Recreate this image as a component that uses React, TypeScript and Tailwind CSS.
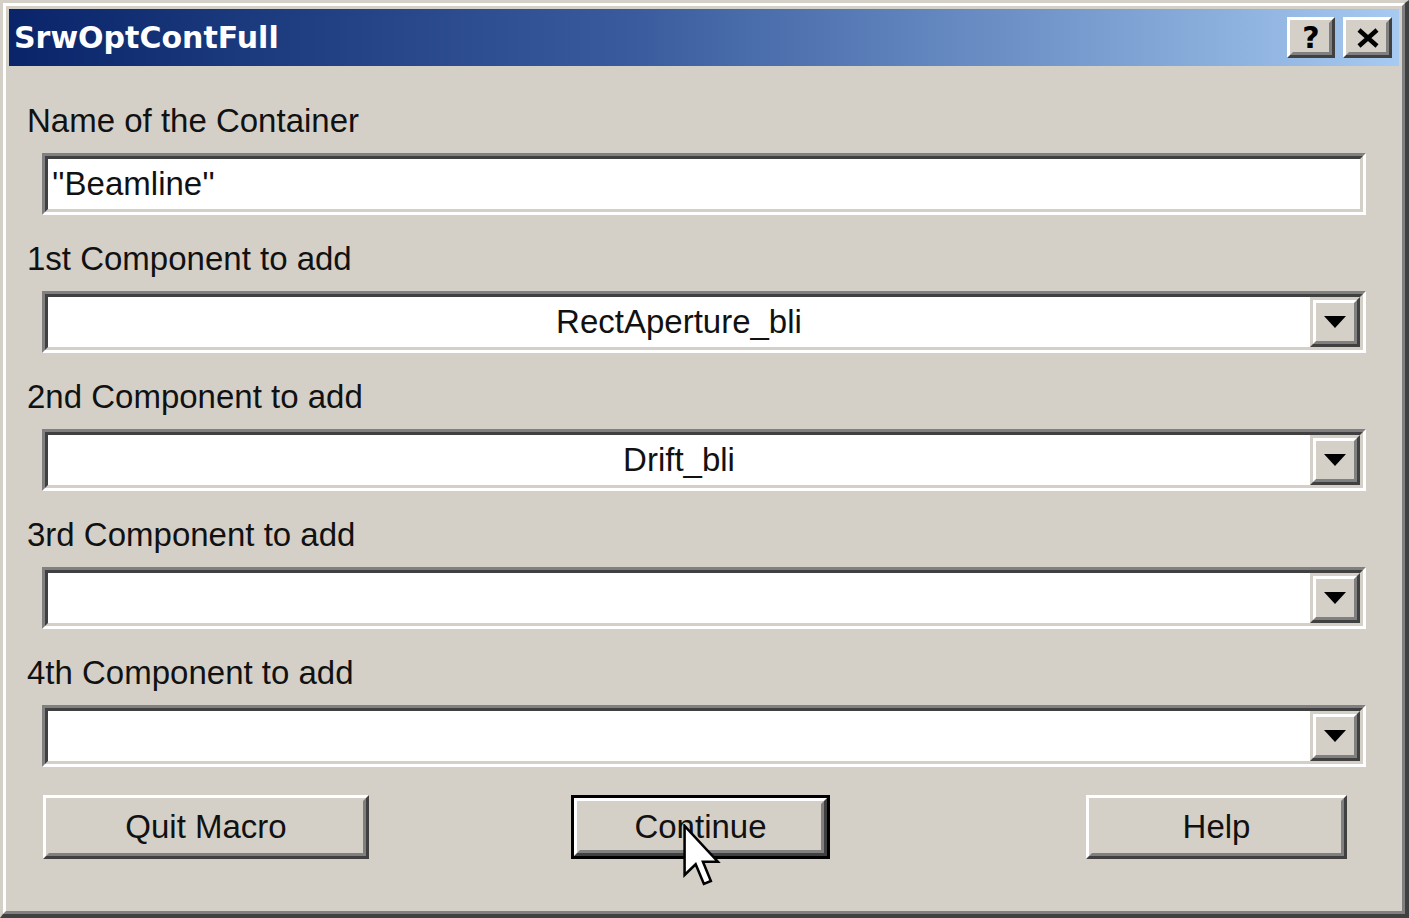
import React from "react";

const body = { fontFamily: '"Liberation Sans", Arial, sans-serif' };

function Sunken({ children }: { children?: React.ReactNode }) {
  return (
    <div className="h-[62px] border-[3px] border-t-[#808080] border-l-[#808080] border-b-white border-r-white">
      <div className="h-full border-[3px] border-t-[#404040] border-l-[#404040] border-b-[#d4d0c8] border-r-[#d4d0c8] bg-white flex items-stretch">
        {children}
      </div>
    </div>
  );
}

function Raised({ className = "", children }: { className?: string; children?: React.ReactNode }) {
  return (
    <div className={`border-[3px] border-t-white border-l-white border-b-[#404040] border-r-[#404040] bg-[#d4d0c8] ${className}`}>
      <div className="h-full border-[3px] border-t-[#d4d0c8] border-l-[#d4d0c8] border-b-[#808080] border-r-[#808080] flex items-center justify-center">
        {children}
      </div>
    </div>
  );
}

function Combo({ value }: { value: string }) {
  return (
    <Sunken>
      <div className="flex-1 flex items-center justify-center text-[33px] text-[#111]">{value}</div>
      <div className="w-[50px] border-[3px] border-t-[#d4d0c8] border-l-[#d4d0c8] border-b-[#404040] border-r-[#404040] bg-[#d4d0c8]">
        <div className="h-full border-[3px] border-t-white border-l-white border-b-[#808080] border-r-[#808080] flex items-center justify-center">
          <svg width="22" height="12" viewBox="0 0 22 12">
            <path d="M0 0 H22 L11 12 Z" fill="#000" />
          </svg>
        </div>
      </div>
    </Sunken>
  );
}

function Label({ text }: { text: string }) {
  return <div className="h-[34px] leading-[34px] px-[18px] text-[33px] text-[#111] whitespace-nowrap">{text}</div>;
}

const rows = [
  { label: "1st Component to add", value: "RectAperture_bli" },
  { label: "2nd Component to add", value: "Drift_bli" },
  { label: "3rd Component to add", value: "" },
  { label: "4th Component to add", value: "" },
];

export default function App() {
  return (
    <div className="w-[1409px] h-[918px] border-l-[3px] border-t-[3px] border-l-[#d4d0c8] border-t-[#d4d0c8] border-r-[4px] border-b-[4px] border-r-[#404040] border-b-[#404040]" style={body}>
      <div className="h-full border-l-[3px] border-t-[3px] border-l-white border-t-white border-r-[3px] border-b-[3px] border-r-[#808080] border-b-[#808080] bg-[#d4d0c8] p-[3px] flex flex-col">
        <div className="h-[57px] shrink-0 flex items-center bg-gradient-to-r from-[#0a246a] via-[#3a5c9e] via-45% to-[#a6caf0] pl-[5px] pr-[7px]">
          <span className="text-white font-bold text-[30px]" style={{ fontFamily: '"DejaVu Sans", Verdana, sans-serif' }}>
            SrwOptContFull
          </span>
          <div className="ml-auto flex gap-[8px]">
            <Raised className="w-[48px] h-[41px]">
              <span className="text-[30px] font-bold leading-none text-black" style={{ fontFamily: '"DejaVu Sans", sans-serif' }}>?</span>
            </Raised>
            <Raised className="w-[49px] h-[41px]">
              <svg width="24" height="20" viewBox="0 0 24 20">
                <path d="M3 2 L21 18 M21 2 L3 18" stroke="#000" strokeWidth="4.5" />
              </svg>
            </Raised>
          </div>
        </div>

        <div className="pt-[38px] flex flex-col">
          <Label text="Name of the Container" />
          <div className="mt-[15px] px-[33px]">
            <Sunken>
              <div className="flex items-center pl-[4px] text-[33px] text-[#111]">''Beamline''</div>
            </Sunken>
          </div>
          {rows.map((r) => (
            <div key={r.label} className="mt-[27px]">
              <Label text={r.label} />
              <div className="mt-[15px] px-[33px]">
                <Combo value={r.value} />
              </div>
            </div>
          ))}
        </div>

        <div className="mt-[28px] flex pl-[34px]">
          <Raised className="w-[326px] h-[64px]">
            <span className="text-[33px] text-[#111]">Quit Macro</span>
          </Raised>
          <div className="relative ml-[202px] w-[259px] h-[64px] border-[3px] border-black">
            <Raised className="h-full">
              <span className="text-[33px] text-[#111]">Continue</span>
            </Raised>
            <svg className="absolute left-[109px] top-[26px]" width="38" height="64" viewBox="0 0 12 20">
              <path d="M0.5 0.5 L0.5 16 L4 12.6 L6.6 18.8 L8.8 17.9 L6.3 11.8 L11 11.8 Z" fill="#fff" stroke="#000" strokeWidth="0.8" strokeLinejoin="miter" />
            </svg>
          </div>
          <Raised className="ml-[256px] w-[261px] h-[64px]">
            <span className="text-[33px] text-[#111]">Help</span>
          </Raised>
        </div>
      </div>
    </div>
  );
}
